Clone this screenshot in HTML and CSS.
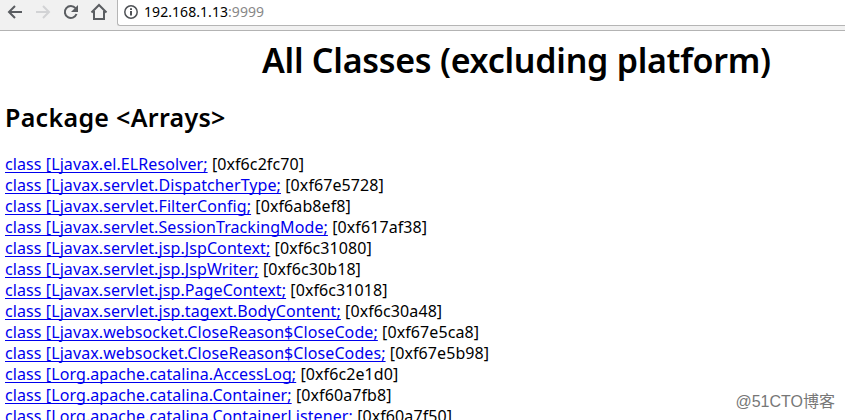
FILE: index.html
```
<!DOCTYPE html>
<html lang="en">
<head>
<meta charset="utf-8">
<title>All Classes (excluding platform)</title>
<link rel="stylesheet" href="styles.css">
</head>
<body>
<header class="toolbar">
<svg class="nav" viewBox="0 0 112 28" fill="none" stroke="#5a5d61" stroke-width="2">
<path d="M22 12H9.500M15 6l-6 6 6 6"/>
<path stroke="#d2d3d5" d="M36 12h12.500M43 6l6 6-6 6"/>
<path d="M75.500 8.200A6 6 0 1 0 76.500 14"/><path fill="#5a5d61" stroke="none" d="M78 5v7h-7z"/>
<path d="M91.500 12.500 99 5l7.500 7.500M94 11v8h10v-8"/>
</svg>
<div class="address">
<svg class="info" viewBox="0 0 14 14" fill="none" stroke="#4f5256"><circle cx="7" cy="7" r="6.200" stroke-width="1.500"/><path stroke-width="2" d="M7 6v4.500M7 3.200v1.800"/></svg>
<span class="host">192.168.1.13<span class="port">:9999</span></span>
</div>
</header>
<main>
<h1>All Classes (excluding platform)</h1>
<h2>Package &lt;Arrays&gt;</h2>
<div class="classes">
<div><a href="#">class [Ljavax.el.ELResolver;</a> [0xf6c2fc70]</div>
<div><a href="#">class [Ljavax.servlet.DispatcherType;</a> [0xf67e5728]</div>
<div><a href="#">class [Ljavax.servlet.FilterConfig;</a> [0xf6ab8ef8]</div>
<div><a href="#">class [Ljavax.servlet.SessionTrackingMode;</a> [0xf617af38]</div>
<div><a href="#">class [Ljavax.servlet.jsp.JspContext;</a> [0xf6c31080]</div>
<div><a href="#">class [Ljavax.servlet.jsp.JspWriter;</a> [0xf6c30b18]</div>
<div><a href="#">class [Ljavax.servlet.jsp.PageContext;</a> [0xf6c31018]</div>
<div><a href="#">class [Ljavax.servlet.jsp.tagext.BodyContent;</a> [0xf6c30a48]</div>
<div><a href="#">class [Ljavax.websocket.CloseReason$CloseCode;</a> [0xf67e5ca8]</div>
<div><a href="#">class [Ljavax.websocket.CloseReason$CloseCodes;</a> [0xf67e5b98]</div>
<div><a href="#">class [Lorg.apache.catalina.AccessLog;</a> [0xf6c2e1d0]</div>
<div><a href="#">class [Lorg.apache.catalina.Container;</a> [0xf60a7fb8]</div>
<div><a href="#">class [Lorg.apache.catalina.ContainerListener;</a> [0xf60a7f50]</div>
</div>
</main>
<div class="watermark">@51CTO博客</div>
</body>
</html>
```
FILE: styles.css
```
* { box-sizing: border-box; }
body {
  margin: 0;
  height: 420px;
  overflow: hidden;
  background: #fff;
  color: #000;
  font-family: "Noto Sans", "Open Sans", sans-serif;
  font-size: 16px;
}
.toolbar {
  display: flex;
  height: 31px;
  background: #f1f1f1;
  border-bottom: 1px solid #b3b3b3;
}
.nav { width: 112px; height: 28px; margin-right: 5px; flex: none; }
.address {
  flex: 1;
  height: 26px;
  display: flex;
  align-items: center;
  padding-left: 6px;
  background: #fff;
  border: 1px solid #b5b5b5;
  border-width: 0 0 1px 1px;
  border-radius: 0 0 0 3px;
}
.info { width: 14px; height: 14px; margin: 0 6px 1px 0; }
.host { font-size: 14px; line-height: 24px; padding-bottom: 2px; letter-spacing: 0.02px; }
.port { color: #888; }
.host { letter-spacing: 0.06px; }
main { padding-left: 5px; }
h1 {
  margin: 7px 0 0 257px;
  font-size: 34px;
  line-height: 44px;
  font-weight: 600;
  letter-spacing: -0.27px;
  white-space: nowrap;
}
h2 {
  margin: 20px 0 21px;
  font-size: 25px;
  line-height: 30px;
  font-weight: 600;
  letter-spacing: 0.3px;
}
.classes { margin-top: 22px; white-space: nowrap; line-height: 21px; letter-spacing: 0.09px; }
a { color: #0000ee; text-decoration: underline; text-underline-offset: 2px; text-decoration-skip-ink: none; }
.watermark {
  position: absolute;
  right: 10px;
  bottom: 7px;
  font: 16px/22px "Liberation Sans", "Noto Sans CJK SC", sans-serif;
  color: #777;
  white-space: nowrap;
}
```
